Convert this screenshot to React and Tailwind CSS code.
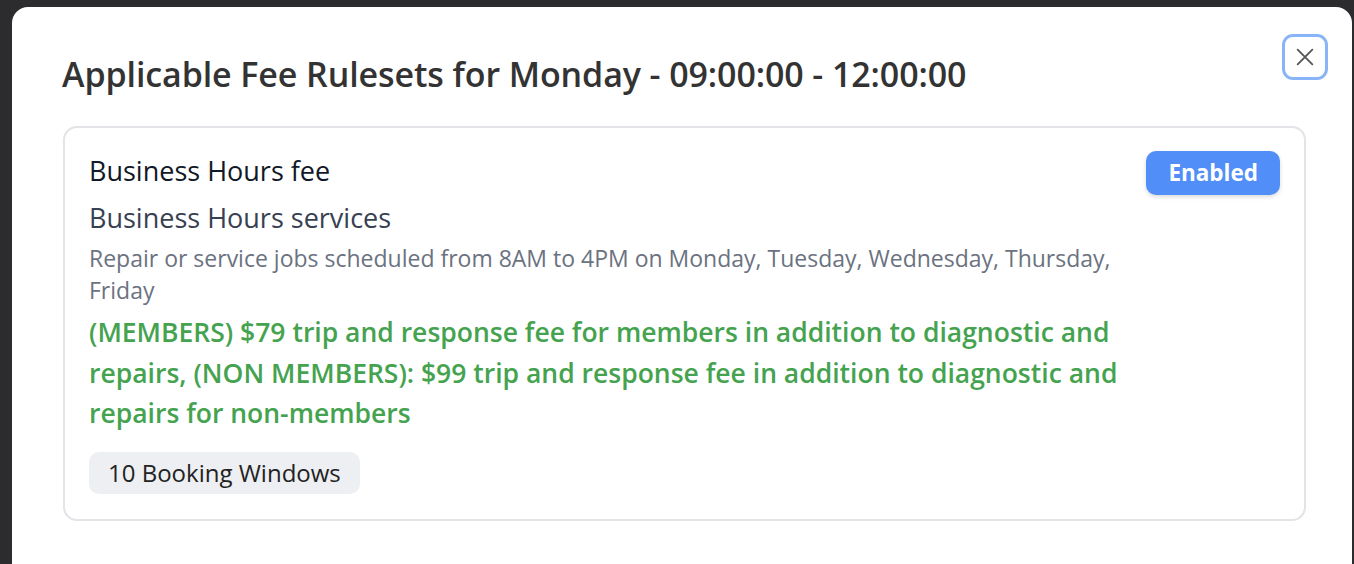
import React from "react";

export default function App() {
  return (
    <div className="h-[564px] w-[1354px] overflow-hidden bg-[#2c2c2e] pl-[12px] pt-[7px]" style={{ fontFamily: "'Open Sans', 'Noto Sans', sans-serif" }}>
      <div className="h-[600px] w-[1340px] rounded-[16px] bg-white">
        <div className="flex items-start justify-between pl-[50px] pr-[24px] pt-[27px]">
          <h1 className="mt-[19px] text-[34px] font-semibold leading-[42px] tracking-[-0.1px] text-[#333333]">
            Applicable Fee Rulesets for Monday - 09:00:00 - 12:00:00
          </h1>
          <button className="flex h-[46px] w-[46px] items-center justify-center rounded-[11px] border-[3px] border-[#8ab4f8] bg-white">
            <svg width="22" height="22" viewBox="0 0 24 24" fill="none" stroke="#555555" strokeWidth="2" strokeLinecap="round">
              <path d="M4 4L20 20M20 4L4 20" />
            </svg>
          </button>
        </div>
        <div className="ml-[51px] mt-[31px] w-[1243px] rounded-[14px] border-2 border-[#e3e4e8] px-[24px] pb-[25px] pt-[23px]">
          <div className="flex items-start justify-between">
            <div className="w-[1055px]">
              <div className="text-[27px] font-medium leading-[40px] text-[#111827]">Business Hours fee</div>
              <div className="mt-[7px] text-[27px] leading-[40px] text-[#374151]">Business Hours services</div>
              <div className="mt-[4px] text-[23px] leading-[32px] text-[#6b7280]">
                Repair or service jobs scheduled from 8AM to 4PM on Monday, Tuesday, Wednesday, Thursday, Friday
              </div>
              <div className="mt-[6px] text-[26.5px] font-semibold leading-[40.5px] text-[#45a350]">
                (MEMBERS) $79 trip and response fee for members in addition to diagnostic and repairs, (NON MEMBERS): $99 trip and response fee in addition to diagnostic and repairs for non-members
              </div>
              <div className="mt-[18px] inline-flex h-[42px] items-center rounded-[10px] bg-[#eeeff2] px-[19px] text-[24px] font-medium text-[#222222]">
                10 Booking Windows
              </div>
            </div>
            <div className="flex h-[44px] items-center rounded-[10px] bg-[#518ef8] px-[22px] text-[22.5px] font-bold text-white shadow-[0_2px_4px_rgba(0,0,0,0.15)]">
              Enabled
            </div>
          </div>
        </div>
      </div>
    </div>
  );
}
